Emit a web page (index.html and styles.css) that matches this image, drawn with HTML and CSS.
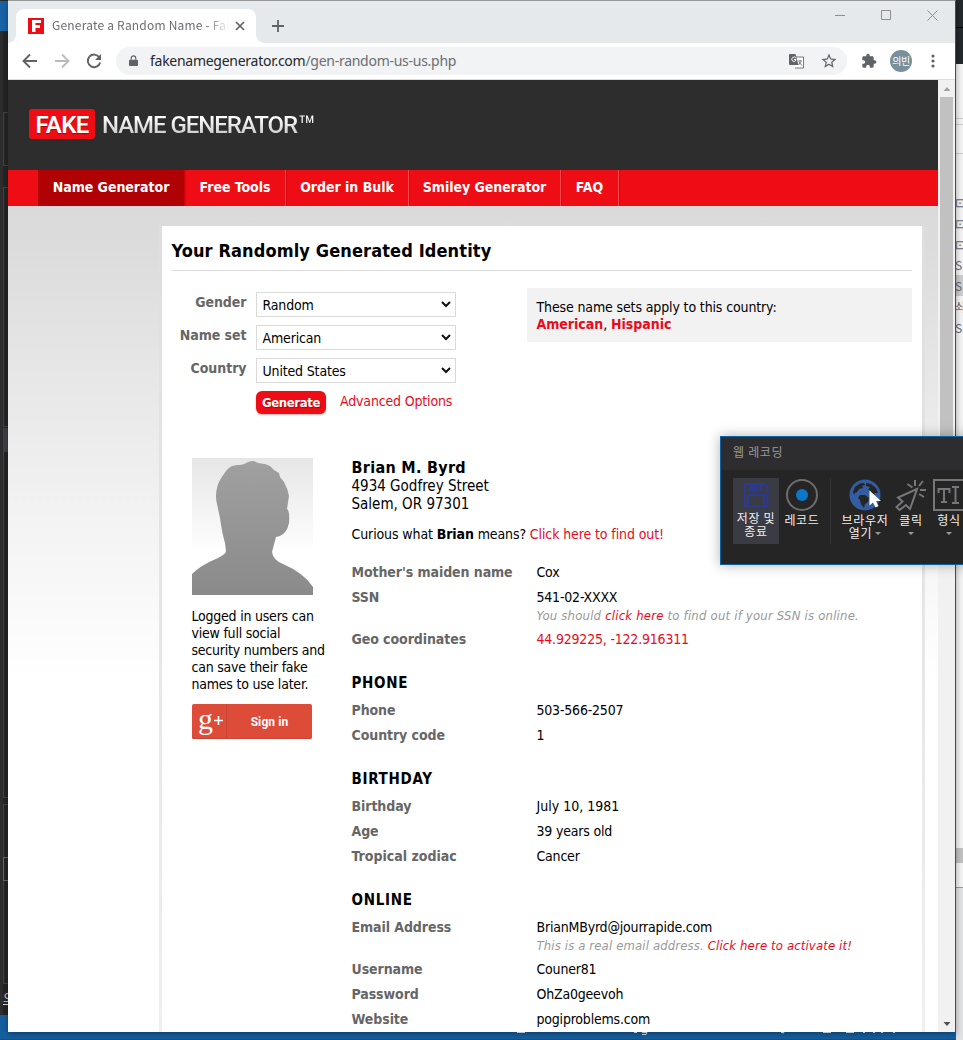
FILE: index.html
```html
<!DOCTYPE html>
<html lang="en">
<head>
<meta charset="utf-8">
<title>Generate a Random Name - Fake Name Generator</title>
<link rel="stylesheet" href="styles.css">
</head>
<body>
<div class="desktop">
  <div class="back-left">
    <i class="bl-blue"></i><i class="bl-box bl-a"></i><i class="bl-box bl-b"></i><i class="bl-box bl-c"></i><i class="bl-box bl-d"></i><i class="bl-box bl-e"></i><i class="bl-sel"></i><span class="bl-text">오</span>
  </div>
  <div class="back-right">
    <i class="br-dark"></i><i class="br-line br-1"></i><i class="br-line br-2"></i><i class="br-line br-3"></i>
    <div class="br-list"><span>⊡</span><span>⊡</span><span>⊡</span><span>S1</span><span class="on">S1</span><span>솨</span><span>S1</span></div>
    <i class="br-scroll"></i>
  </div>
  <div class="taskbar"></div>

  <div class="browser">
    <div class="tabstrip">
      <div class="tab">
        <svg class="favicon" viewBox="0 0 16 16"><rect width="16" height="16" fill="#ee0d15"/><path d="M4 2h9v3H7.500v2H12v3H7.500v4H4z" fill="#fff"/></svg>
        <span class="tab-title">Generate a Random Name - Fake</span>
        <svg class="tab-close" viewBox="0 0 10 10"><path d="M1 1l8 8M9 1L1 9" stroke="#5f6368" stroke-width="1.700"/></svg>
      </div>
      <svg class="newtab" viewBox="0 0 12 12"><path d="M6 0v12M0 6h12" stroke="#5f6368" stroke-width="1.800"/></svg>
      <div class="winbtns">
        <svg viewBox="0 0 11 11"><path d="M0 5.500h10" stroke="#8b8d90"/></svg>
        <svg viewBox="0 0 11 11"><path d="M.5.5h9v9h-9z" fill="none" stroke="#8b8d90"/></svg>
        <svg viewBox="0 0 11 11"><path d="M.5.5l10 10M10.500.5l-10 10" stroke="#8b8d90"/></svg>
      </div>
    </div>
    <div class="toolbar">
      <svg class="ic back" viewBox="0 0 16 16"><path d="M15 8H2M8 1.500L1.500 8 8 14.500" fill="none" stroke="#5f6368" stroke-width="1.900"/></svg>
      <svg class="ic fwd" viewBox="0 0 16 16"><path d="M1 8h13M8 1.500L14.500 8 8 14.500" fill="none" stroke="#b9bbbe" stroke-width="1.900"/></svg>
      <svg class="ic reload" viewBox="0 0 16 16"><path d="M13.300 4.300A6.300 6.300 0 1 0 14.200 9.500" fill="none" stroke="#5f6368" stroke-width="1.900"/><path d="M15 1v6H9z" fill="#5f6368"/></svg>
      <div class="omnibox">
        <svg class="lock" viewBox="0 0 10 13"><path d="M1 5h8q1 0 1 1v5q0 1-1 1H1q-1 0-1-1V6q0-1 1-1z" fill="#5f6368"/><path d="M2.500 5V3.300a2.500 2.500 0 0 1 5 0V5" fill="none" stroke="#5f6368" stroke-width="1.300"/></svg>
        <span class="url">fakenamegenerator.com<em>/gen-random-us-us.php</em></span>
        <svg class="translate" viewBox="0 0 15 15"><path d="M7 3h7.500v11H6" fill="#fff" stroke="#74777b"/><path d="M0 1q0-1 1-1h5.500l3 11H1q-1 0-1-1z" fill="#5f6368"/><path d="M7 4.200A2.200 2.200 0 1 0 7 6.200V5.500H5" fill="none" stroke="#fff"/><path d="M9 7h4M11 6v1M12 7.500L9.500 11M10 8l3 3.500" stroke="#74777b" fill="none"/></svg>
        <svg class="star" viewBox="0 0 24 24"><path fill="#5f6368" d="M22 9.240l-7.190-.62L12 2 9.190 8.630 2 9.240l5.460 4.730L5.820 21 12 17.270 18.180 21l-1.630-7.030L22 9.240zM12 15.400l-3.760 2.270 1-4.280-3.320-2.880 4.380-.38L12 6.100l1.710 4.040 4.380.38-3.320 2.880 1 4.280L12 15.400z"/></svg>
      </div>
      <svg class="puzzle" viewBox="0 0 24 24"><path fill="#5f6368" d="M20.500 11H19V7c0-1.100-.9-2-2-2h-4V3.500C13 2.120 11.880 1 10.500 1S8 2.120 8 3.500V5H4c-1.100 0-1.990.9-1.990 2v3.800H3.500c1.490 0 2.700 1.210 2.700 2.700s-1.210 2.700-2.700 2.700H2V20c0 1.100.9 2 2 2h3.800v-1.500c0-1.490 1.210-2.700 2.700-2.700s2.700 1.210 2.700 2.700V22H17c1.100 0 2-.9 2-2v-4h1.500c1.380 0 2.500-1.120 2.500-2.500S21.880 11 20.500 11z"/></svg>
      <span class="avatar">의빈</span>
      <svg class="dots" viewBox="0 0 4 14"><g fill="#5f6368"><circle cx="2" cy="2" r="1.600"/><circle cx="2" cy="7" r="1.600"/><circle cx="2" cy="12" r="1.600"/></g></svg>
    </div>

    <div class="viewport">
      <div class="page">
        <header class="site-header"><span class="fake"><b>FAKE</b></span><span class="logo">NAME GENERATOR<small>™</small></span></header>
        <nav class="nav"><a class="n1 active">Name Generator</a><a class="n2">Free Tools</a><a class="n3">Order in Bulk</a><a class="n4">Smiley Generator</a><a class="n5">FAQ</a></nav>
        <div class="frame">
          <main class="panel">
            <h1><span>Your Randomly Generated Identity</span></h1>
            <div class="top">
              <form class="form">
                <label>Gender</label><div class="select">Random<svg viewBox="0 0 10 7"><path d="M1 1l4 4 4-4" fill="none" stroke="#111" stroke-width="2"/></svg></div>
                <label>Name set</label><div class="select">American<svg viewBox="0 0 10 7"><path d="M1 1l4 4 4-4" fill="none" stroke="#111" stroke-width="2"/></svg></div>
                <label>Country</label><div class="select">United States<svg viewBox="0 0 10 7"><path d="M1 1l4 4 4-4" fill="none" stroke="#111" stroke-width="2"/></svg></div>
                <span></span><div class="actions"><span class="generate">Generate</span><a class="adv">Advanced Options</a></div>
              </form>
              <div class="sets"><div>These name sets apply to this country:</div><div><b><a>American</a></b>, <b><a>Hispanic</a></b></div></div>
            </div>
            <div class="identity">
              <aside>
                <svg class="portrait" viewBox="0 0 121 137">
                  <defs><linearGradient id="bg" x1="0" y1="0" x2="0" y2="1"><stop offset="0" stop-color="#e6e6e6"/><stop offset=".7" stop-color="#fff"/></linearGradient><linearGradient id="man" x1="0" y1="0" x2="0" y2="1"><stop offset="0" stop-color="#a0a0a0"/><stop offset="1" stop-color="#8a8a8a"/></linearGradient></defs>
                  <rect width="121" height="137" fill="url(#bg)"/>
                  <path fill="url(#man)" d="M0 137V116Q9 107 26 100Q34 96 34 93L33 85Q30 75 28 60L25 46Q23 38 25 30Q26 25 28 22Q31 17 34 13Q36 10 40 8L45 7Q51 7 54 5Q61 1 66 5L73 6L78 8L82 12L87 15L88 19L92 24Q96 31 97 38L95 51Q98 53 97 65Q95 75 88 78L84 79L80 94Q81 102 91 106Q112 115 121 129V137Z"/>
                </svg>
                <p><span>Logged in users can</span><br><span>view full social</span><br><span>security numbers and</span><br><span>can save their fake</span><br><span>names to use later.</span></p>
                <div class="signin"><span class="gplus">g<svg viewBox="0 0 9 9"><path d="M4.500 0v9M0 4.500h9" stroke="#fff" stroke-width="1.600"/></svg></span><span class="signtext">Sign in</span></div>
              </aside>
              <section class="details">
                <h2><span>Brian M. Byrd</span></h2>
                <div class="address"><span>4934 Godfrey Street</span><br><span>Salem, OR 97301</span></div>
                <div class="curious"><span>Curious what <b>Brian</b> means? <a>Click here to find out!</a></span></div>
                <dl><dt>Mother's maiden name</dt><dd>Cox</dd></dl>
                <dl><dt>SSN</dt><dd>541-02-XXXX<div class="note">You should <a>click here</a> to find out if your SSN is online.</div></dd></dl>
                <dl><dt>Geo coordinates</dt><dd><a>44.929225, -122.916311</a></dd></dl>
                <h3>PHONE</h3>
                <dl><dt>Phone</dt><dd>503-566-2507</dd></dl>
                <dl><dt>Country code</dt><dd>1</dd></dl>
                <h3>BIRTHDAY</h3>
                <dl><dt>Birthday</dt><dd class="wide">July 10, 1981</dd></dl>
                <dl><dt>Age</dt><dd>39 years old</dd></dl>
                <dl><dt class="wide">Tropical zodiac</dt><dd>Cancer</dd></dl>
                <h3>ONLINE</h3>
                <dl><dt>Email Address</dt><dd>BrianMByrd@jourrapide.com<div class="note n-mail">This is a real email address. <a>Click here to activate it!</a></div></dd></dl>
                <dl><dt>Username</dt><dd>Couner81</dd></dl>
                <dl><dt>Password</dt><dd>OhZa0geevoh</dd></dl>
                <dl><dt>Website</dt><dd>pogiproblems.com</dd></dl>
              </section>
            </div>
          </main>
        </div>
      </div>
      <div class="scrollbar"><svg viewBox="0 0 7 4"><path d="M0 4L3.500 0 7 4z" fill="#a3a3a3"/></svg><i></i><svg viewBox="0 0 7 4"><path d="M0 0h7L3.500 4z" fill="#505050"/></svg></div>
    </div>
  </div>
  <svg class="taskbar-text" viewBox="0 0 390 3"><path d="M2 .5h8M119 .5h3M127 .5h5l-1 2h-4M266 .5h3l-1 1M308 .5h8M331 .5h8M348 .5h2M358 .5h2M366 .5h2M378 .5h2" fill="none" stroke="#b9c6d2"/></svg>

  <div class="recorder">
    <div class="rec-title">웹 레코딩</div>
    <div class="rec-body">
      <div class="tool save"><svg viewBox="0 0 32 32"><g fill="none" stroke="#2b3990" stroke-width="2"><path d="M5 5h20l2.500 3v19.500H5zM10 5v7h11V5M8 27V16h16v11"/></g><path d="M11 5h6v7h-6zM19 5h2v7h-2z" fill="#2b3990"/></svg><span>저장 및<br>종료</span></div>
      <div class="tool rec"><svg viewBox="0 0 32 32"><circle cx="16" cy="16" r="15" fill="none" stroke="#6d6d6d" stroke-width="2"/><circle cx="16" cy="16" r="6" fill="#0a78c8"/></svg><span>레코드</span></div>
      <i class="sep"></i>
      <div class="tool web"><svg viewBox="0 0 32 32"><circle cx="16" cy="16" r="15.500" fill="#345ca0"/><path fill="#252526" d="M4 13L6 8l5-3.500 4-.5 1 2-3 1 1 2-4 1-2 3-2 1-1 2zM17 4l5 1 5 4 2 5-3 0-1 2-3-1 0-3-3-1 2-3-4-1zM11 16l5 0 4 3-1 4-3 2-1 4-3-4-1-4-2-2z"/><path fill="#fff" d="M20.500 11.500v15l3.500-3 2.500 5 3-1.500-2.500-5H32z"/></svg><span>브라우저<br>열기<i class="caret"></i></span></div>
      <div class="tool click"><svg viewBox="0 0 32 32"><g fill="none" stroke="#777779" stroke-width="2"><path d="M22 10L3 18.500l4.500 4L1.500 28l3 3L11 26l4 4 7-20zM12.500 5l5 3.500M20 1v6M28 2l-4 5M25 11h6M24 15l5 3"/></g></svg><span>클릭<i class="caret block"></i></span></div>
      <div class="tool type"><svg viewBox="0 0 32 32"><path d="M1 1h30v30H1z" fill="none" stroke="#777779" stroke-width="2"/><path d="M5 10h12M5.500 14V9M16.500 14V9M11 9v14M8 23h6M19 8h7M22.500 8v16M19 24h7" fill="none" stroke="#777779" stroke-width="2"/></svg><span>형식<i class="caret block"></i></span></div>
    </div>
  </div>
</div>
</body>
</html>
```
FILE: styles.css
```css
* { box-sizing: border-box; }
body { margin: 0; overflow: hidden; font-family: "DejaVu Sans Condensed", "DejaVu Sans", sans-serif; font-stretch: condensed; font-size: 14px; color: #000; }
h1, h2, h3, p, dl, dt, dd { margin: 0; }
svg { display: block; flex: none; }
a { color: #e90a1b; }
.desktop { position: relative; width: 963px; height: 1040px; overflow: hidden; background: #e1e2e4; }

/* windows behind the browser */
.back-left { position: absolute; left: 0; top: 0; width: 8px; height: 1015px; background: #252526; border-left: 3px solid #2d2d30; }
.back-left i { position: absolute; }
.bl-blue { left: -3px; top: 1px; width: 8px; height: 30px; background: #1763a6; }
.bl-box { left: 0; width: 8px; border: 1px solid #434346; border-right: 0; }
.bl-a { top: 112px; height: 54px; }
.bl-b { top: 187px; height: 240px; }
.bl-c { top: 450px; height: 348px; }
.bl-d { top: 804px; height: 180px; }
.bl-e { top: 857px; height: 24px; border-color: #66666a; }
.bl-sel { left: 0; top: 428px; width: 8px; height: 24px; background: #3f3f46; }
.bl-text { position: absolute; left: 0; top: 989px; color: #ddd; font: 12px "Noto Sans CJK KR", sans-serif; text-decoration: underline; }
.back-right { position: absolute; left: 955px; top: 0; width: 8px; height: 888px; background: #f3f3f3; overflow: hidden; border-bottom: 1px solid #999; }
.back-right > i { position: absolute; left: 0; width: 8px; }
.br-dark { top: 0; height: 64px; background: linear-gradient(#23282d 27px, #000 27px, #000 28px, #23282d 28px); }
.br-line { height: 1px; background: #ccc; }
.br-1 { top: 118px; } .br-2 { top: 124px; } .br-3 { top: 153px; }
.br-list { position: absolute; top: 191px; left: 0; width: 8px; color: #5d6a82; font: 12px/21px "Noto Sans CJK KR", sans-serif; }
.br-list span { display: block; height: 21px; overflow: hidden; }
.br-list .on { background: #ccc; }
.br-scroll { top: 848px; height: 15px; background: #c1c1c1; }
.taskbar { position: absolute; left: 0; top: 1015px; width: 956px; height: 25px; background: #165f9f; border-bottom: 1px solid #3a4653; }
.taskbar-text { position: absolute; left: 515px; top: 1032px; width: 390px; height: 3px; }

/* browser chrome */
.browser { position: absolute; left: 8px; top: 0; width: 948px; height: 1032px; background: #fff; border-top: 1px solid #98999b; border-right: 1px solid #4b4b4d; box-shadow: 0 2px 6px rgba(0,0,0,.35); display: flex; flex-direction: column; }
.tabstrip { height: 42px; background: #e5e9ec; display: flex; padding: 8px 0 0 8px; }
.tab { position: relative; width: 240px; height: 34px; border-radius: 8px 8px 0 0; background: #fff; display: flex; align-items: center; padding-left: 12px; }
.tab::before, .tab::after { content: ""; position: absolute; bottom: 0; width: 8px; height: 8px; }
.tab::before { left: -8px; background: radial-gradient(circle at 0 0, transparent 7.500px, #fff 8px); }
.tab::after { right: -8px; background: radial-gradient(circle at 100% 0, transparent 7.500px, #fff 8px); }
.favicon { width: 16px; height: 16px; }
.tab-title { margin: -3px 0 0 8px; width: 176px; overflow: hidden; white-space: nowrap; font: 12px "Noto Sans CJK KR", "Noto Sans", sans-serif; letter-spacing: .2px; color: #6b6e72; -webkit-mask-image: linear-gradient(90deg, #000 155px, transparent 177px); }
.tab-close { width: 10px; height: 10px; margin-left: 7px; }
.newtab { width: 12px; height: 12px; margin: 11px 0 0 16px; }
.winbtns { margin-left: auto; display: flex; gap: 35px; padding: 1px 17px 0 0; }
.winbtns svg { width: 11px; height: 11px; }
.toolbar { height: 37px; border-bottom: 1px solid #dcdddf; display: flex; align-items: center; padding-left: 14px; }
.ic { width: 16px; height: 16px; margin-right: 16px; }
.reload { margin-right: 14px; }
.omnibox { width: 731px; height: 28px; border-radius: 14px; background: #f1f3f4; display: flex; align-items: center; padding-left: 13px; }
.lock { width: 9px; height: 12px; }
.url { margin: -1px 0 0 12px; width: 639px; font: 14px "Noto Sans", sans-serif; letter-spacing: -.27px; color: #25272b; white-space: nowrap; }
.url em { font-style: normal; color: #6b6e72; }
.translate { width: 15px; height: 15px; }
.star { width: 18px; height: 18px; margin-left: 16px; }
.puzzle { width: 16px; height: 16px; margin-left: 14px; }
.avatar { width: 22px; height: 22px; border-radius: 50%; background: #78909c; color: #fff; font: 10px/21px "Noto Sans CJK KR", sans-serif; letter-spacing: -.5px; text-align: center; margin-left: 13px; }
.dots { width: 4px; height: 14px; margin-left: 19px; }

/* page */
.viewport { display: flex; height: 952px; }
.page { width: 930px; height: 952px; overflow: hidden; background: #fff linear-gradient(#dadada 126px, #dcdcdc 170px, #f2f2f2 430px, #fff 600px); letter-spacing: -.16px; }
.scrollbar { width: 17px; background: #f1f1f1; display: flex; flex-direction: column; align-items: center; padding: 7px 0 6px; }
.scrollbar svg { width: 8px; height: 4px; }
.scrollbar i { width: 13px; height: 345px; margin-top: 6px; background: #c1c1c1; }
.scrollbar svg:last-child { margin-top: auto; }
.site-header { height: 90px; background: #2d2d2d; display: flex; padding: 29px 0 0 21px; font: 500 24px/32px Roboto, sans-serif; color: #fff; }
.fake { width: 66px; height: 30px; border-radius: 3px; background: #ee0d15; text-align: center; }
.fake b { font-weight: 600; letter-spacing: -.7px; text-shadow: 0 1px 1px rgba(0,0,0,.35); }
.logo { margin-left: 7px; letter-spacing: -1.040px; background: linear-gradient(#fff 8px, #c9c9c9 26px); -webkit-background-clip: text; color: transparent; white-space: nowrap; }
.logo small { font-size: 29px; line-height: 0; vertical-align: -3px; font-weight: 400; letter-spacing: 0; margin-left: 1px; }
.nav { height: 36px; background: #ee0d15; display: flex; padding-left: 30px; letter-spacing: -.03px; }
.nav a { color: #fff; font-weight: 700; line-height: 34px; text-align: center; border-right: 1px solid #f4484e; box-shadow: 1px 0 0 #d40a12; white-space: nowrap; }
.nav .active { background: #b00205; border-color: #d0060a; }
.n1 { width: 147px; } .n2 { width: 101px; } .n3 { width: 123px; } .n4 { width: 152px; } .n5 { width: 58px; }
.frame { width: 766px; margin: 20px 0 0 151px; padding: 0 3px; background: linear-gradient(#dedede, #e4e4e4 300px, #f0f0f0 850px); }
.panel { height: 830px; background: #fff; padding: 0 10px 0 9.500px; }
h1 { height: 45px; margin-left: .5px; border-bottom: 1px solid #dbdbdb; font-size: 18px; line-height: 50px; white-space: nowrap; letter-spacing: .12px; }
h1 span { margin-left: -.5px; }
.top { display: flex; justify-content: space-between; height: 187px; padding-top: 17px; }
.form { display: grid; grid-template-columns: 75px 200px; column-gap: 9.500px; grid-auto-rows: 33px; padding-top: 4px; }
.form label { text-align: right; font-weight: 700; color: #666; line-height: 20px; white-space: nowrap; letter-spacing: -.05px; }
.select { height: 25px; border: 1px solid #dadada; padding: 0 4px 0 5.500px; display: flex; justify-content: space-between; align-items: center; background: #fff; }
.select svg { width: 10px; height: 7px; }
.actions { display: flex; white-space: nowrap; }
.generate { width: 70px; height: 23px; border-radius: 6px; background: #ee0d15; color: #fff; font-weight: 700; font-size: 13px; line-height: 23px; letter-spacing: -.35px; text-align: center; box-shadow: 0 1px 2px rgba(0,0,0,.3); text-shadow: 1px 1px 1px rgba(0,0,0,.35); }
.adv { margin-left: 14px; line-height: 20px; }
.sets { width: 385px; height: 54px; background: #f2f2f2; padding: 11px 9.500px; line-height: 17px; letter-spacing: -.13px; }
.sets b { letter-spacing: -.02px; }
.identity { display: flex; padding-left: 20.500px; }
aside { width: 159.500px; white-space: nowrap; }
.portrait { width: 121px; height: 137px; }
aside p { margin: 13px 0 0 -.5px; line-height: 17px; letter-spacing: -.22px; }
.signin { margin-top: 11px; width: 120px; height: 35px; border-radius: 2px; background: #dd4b39; color: #fff; display: flex; box-shadow: inset 0 -1px 0 #c94535; }
.gplus { width: 35px; border-right: 1px solid #c94535; display: flex; padding-left: 6px; font: 30px/29px "Liberation Serif", serif; }
.gplus svg { width: 9px; height: 9px; margin: 12px 0 0 1px; }
.signtext { flex: 1; text-align: center; font: 700 12px/36px Roboto, sans-serif; letter-spacing: .1px; }
h2 { font-size: 16px; line-height: 19px; white-space: nowrap; letter-spacing: .3px; }
.address { font-size: 15px; line-height: 18px; letter-spacing: 0; }
.curious { margin-top: 13px; line-height: 17px; height: 34px; white-space: nowrap; letter-spacing: -.11px; }
dl { display: flex; padding: 4px 0; line-height: 17px; white-space: nowrap; letter-spacing: -.2px; }
dt { width: 185px; font-weight: 700; color: #666; letter-spacing: -.08px; }
.wide { letter-spacing: 0; }
.note { font-size: 13px; line-height: 19px; margin-bottom: -2px; font-style: italic; color: #999; letter-spacing: .2px; }
.n-mail { letter-spacing: .13px; }
h3 { font-size: 15px; line-height: 22px; padding: 20px 0 4px; letter-spacing: .7px; }

/* floating recorder window */
.recorder { position: absolute; left: 720px; top: 436px; width: 260px; height: 129px; background: #252526; border: 1px solid #0d62a6; box-shadow: 0 0 12px rgba(0,0,0,.3); color: #f1f1f1; font: 12px/13px "Noto Sans CJK KR", sans-serif; letter-spacing: .7px; }
.rec-title { height: 33px; background: #2d2d30; color: #999; line-height: 29px; padding-left: 12px; }
.rec-body { display: flex; padding: 8px 0 0 12px; height: 90px; }
.tool { display: flex; flex-direction: column; align-items: center; text-align: center; white-space: nowrap; }
.tool svg { width: 32px; height: 32px; margin-top: 1px; }
.tool span { margin-top: 2px; }
.save { width: 46px; height: 66px; background: #3b3b43; }
.save span { margin-top: 0; }
.rec { width: 46px; }
.sep { width: 1px; height: 66px; background: #333337; margin-left: 5px; }
.web { width: 58px; margin-left: 5px; }
.click { width: 34px; }
.type { width: 42px; }
.rec span, .click span, .type span { margin-top: 2px; }
.caret { display: inline-block; border: 3px solid transparent; border-top-color: #999; border-bottom: 0; margin-left: 3px; vertical-align: 3px; }
.caret.block { display: block; width: 0; margin: 6px auto 0; }
```
